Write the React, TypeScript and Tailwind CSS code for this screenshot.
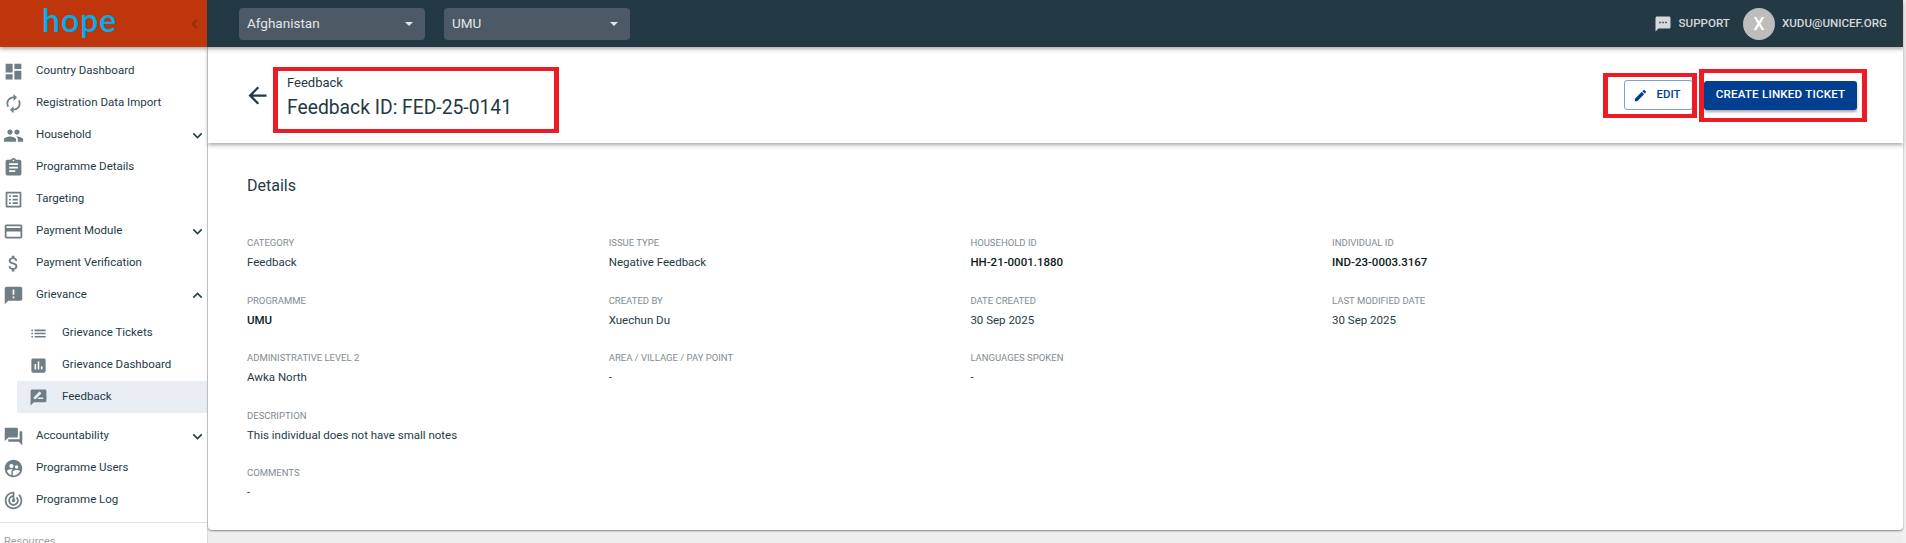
import {
  MdArrowBack,
  MdAssessment,
  MdAssignment,
  MdAttachMoney,
  MdAutorenew,
  MdChevronLeft,
  MdCreditCard,
  MdDashboard,
  MdEdit,
  MdExpandLess,
  MdExpandMore,
  MdAnnouncement,
  MdList,
  MdListAlt,
  MdPeople,
  MdQuestionAnswer,
  MdRateReview,
  MdSms,
  MdSupervisedUserCircle,
  MdTrackChanges,
} from 'react-icons/md';
import type { IconType } from 'react-icons';

type NavItem = { label: string; icon: IconType; chevron?: 'up' | 'down' };

const topItems: NavItem[] = [
  { label: 'Country Dashboard', icon: MdDashboard },
  { label: 'Registration Data Import', icon: MdAutorenew },
  { label: 'Household', icon: MdPeople, chevron: 'down' },
  { label: 'Programme Details', icon: MdAssignment },
  { label: 'Targeting', icon: MdListAlt },
  { label: 'Payment Module', icon: MdCreditCard, chevron: 'down' },
  { label: 'Payment Verification', icon: MdAttachMoney },
  { label: 'Grievance', icon: MdAnnouncement, chevron: 'up' },
];

const subItems = [
  { label: 'Grievance Tickets', icon: MdList },
  { label: 'Grievance Dashboard', icon: MdAssessment },
  { label: 'Feedback', icon: MdRateReview, active: true },
];

const bottomItems: NavItem[] = [
  { label: 'Accountability', icon: MdQuestionAnswer, chevron: 'down' },
  { label: 'Programme Users', icon: MdSupervisedUserCircle },
  { label: 'Programme Log', icon: MdTrackChanges },
];

const fields = [
  { label: 'Category', value: 'Feedback' },
  { label: 'Issue Type', value: 'Negative Feedback' },
  { label: 'Household ID', value: 'HH-21-0001.1880', strong: true },
  { label: 'Individual ID', value: 'IND-23-0003.3167', strong: true },
  { label: 'Programme', value: 'UMU', strong: true },
  { label: 'Created By', value: 'Xuechun Du' },
  { label: 'Date Created', value: '30 Sep 2025' },
  { label: 'Last Modified Date', value: '30 Sep 2025' },
  { label: 'Administrative Level 2', value: 'Awka North' },
  { label: 'Area / Village / Pay Point', value: '-' },
  { label: 'Languages Spoken', value: '-' },
];

function Field({ label, value, strong, wide }: { label: string; value: string; strong?: boolean; wide?: boolean }) {
  return (
    <div className={wide ? 'col-span-4 h-[57.5px]' : 'h-[57.5px]'}>
      <div className="text-[9.5px] leading-[14px] uppercase text-[#7f8b92]">{label}</div>
      <div className={strong ? 'mt-[5px] text-[11.5px] leading-[14px] font-medium text-[#0c1a22]' : 'mt-[5px] text-[11.5px] leading-[14px] text-[#253b46]'}>
        {value}
      </div>
    </div>
  );
}

function Row({ item }: { item: NavItem }) {
  const Icon = item.icon;
  return (
    <div className="flex h-8 items-center pl-[3px]">
      <Icon className="h-[21px] w-[21px] text-[#6f7d85]" />
      <span className="ml-[12px] flex-1 text-[11.5px] text-[#253b46]">{item.label}</span>
      {item.chevron === 'down' && <MdExpandMore className="h-[19px] w-[19px] text-[#253b46]" />}
      {item.chevron === 'up' && <MdExpandLess className="h-[19px] w-[19px] text-[#253b46]" />}
    </div>
  );
}

function CountrySelect({ label }: { label: string }) {
  return (
    <div className="flex h-8 w-[186px] items-center justify-between rounded-[4px] bg-[#4b5a64] pl-2 pr-3">
      <span className="text-[13.5px] text-[#e3e6e8]">{label}</span>
      <span className="h-0 w-0 border-x-[4px] border-t-[4px] border-x-transparent border-t-[#e3e6e8]" />
    </div>
  );
}

export default function App() {
  return (
    <div className="flex h-[543px] w-[1906px] flex-col overflow-hidden bg-[#f1f1f1] font-['Roboto',sans-serif]">
      {/* Top bar */}
      <div className="relative z-20 flex h-[47px] w-[1903px] shrink-0 bg-[#233944] shadow-[0_2px_4px_rgba(0,0,0,0.35)]">
        <div className="flex w-[207px] shrink-0 items-center bg-[#bf360c] pr-[2px]">
          <span className="ml-[42px] flex-1 pb-[7px] font-['Lato',sans-serif] text-[32px] leading-none font-semibold tracking-[1px] text-[#00aeef]">
            hope
          </span>
          <MdChevronLeft className="h-5 w-5 text-[#8f2c0d]" />
        </div>
        <div className="ml-[32px] flex items-center gap-[19px]">
          <CountrySelect label="Afghanistan" />
          <CountrySelect label="UMU" />
        </div>
        <div className="ml-auto flex items-center pr-[16px] text-[11.6px] font-medium uppercase text-[#d5d9dc]">
          <MdSms className="h-[18px] w-[18px]" />
          <span className="ml-[7px]">Support</span>
          <span className="ml-[13px] flex h-8 w-8 items-center justify-center rounded-full bg-[#bdbdbd] text-[18px] font-medium text-white">X</span>
          <span className="ml-[7px]">xudu@unicef.org</span>
        </div>
      </div>

      <div className="flex min-h-0 flex-1">
        {/* Sidebar */}
        <aside className="w-[208px] shrink-0 overflow-hidden border-r border-[#d9d9d9] bg-white pt-[8px]">
          {topItems.map((item) => (
            <Row key={item.label} item={item} />
          ))}
          <div className="pt-[6px] pb-[7px]">
            {subItems.map((item) => {
              const Icon = item.icon;
              return (
                <div key={item.label} className={item.active ? 'ml-[17px] flex h-8 items-center bg-[#e9eef5] pl-[12px]' : 'ml-[17px] flex h-8 items-center pl-[12px]'}>
                  <Icon className="h-[19px] w-[19px] text-[#6f7d85]" />
                  <span className="ml-[14px] text-[11.5px] text-[#253b46]">{item.label}</span>
                </div>
              );
            })}
          </div>
          {bottomItems.map((item) => (
            <Row key={item.label} item={item} />
          ))}
          <div className="mt-[6px] border-t border-[#e0e0e0] pl-1 pt-[12px] text-[11px] leading-[14px] text-[#9e9e9e]">Resources</div>
        </aside>

        {/* Main */}
        <main className="w-[1695px] shrink-0 bg-[#eeeeee]">
          <div className="relative z-10 flex h-[96px] items-center bg-white pl-[36px] pr-[46px] shadow-[0_2px_4px_rgba(0,0,0,0.35)]">
            <MdArrowBack className="h-[27px] w-[27px] text-[#233944]" />
            <div className="relative ml-[16px] mt-[5px] flex-1">
              <div className="text-[13px] leading-[16px] text-[#233944]">Feedback</div>
              <div className="mt-[4px] text-[19.3px] leading-[26px] text-[#233944]">Feedback ID: FED-25-0141</div>
              <div className="absolute top-[-8px] left-[-14px] h-[66px] w-[286px] border-x-[5px] border-y-[4px] border-[#ed1c24]" />
            </div>
            <div className="flex items-center gap-[11px]">
              <div className="relative">
                <button className="flex h-[30px] w-[69px] items-center justify-center gap-[8px] rounded-[3px] border border-[#7f9fcf] bg-white pr-[3px] text-[11.5px] font-medium text-[#033f91]">
                  <MdEdit className="h-[15px] w-[15px]" />
                  EDIT
                </button>
                <div className="absolute top-[-7px] left-[-21px] h-[45px] w-[94px] border-x-[5px] border-y-[4px] border-[#ed1c24]" />
              </div>
              <div className="relative">
                <button className="h-[29px] w-[153px] rounded-[3px] bg-[#033f91] text-[11.6px] font-medium tracking-[0.2px] text-white shadow-[0_2px_3px_rgba(0,0,0,0.35)]">
                  CREATE LINKED TICKET
                </button>
                <div className="absolute top-[-12px] left-[-5px] h-[53px] w-[168px] border-x-[5px] border-y-[4px] border-[#ed1c24]" />
              </div>
            </div>
          </div>

          <section className="h-[387px] rounded-b-[4px] bg-white pl-[39px] pt-[33px] shadow-[0_1px_2px_rgba(0,0,0,0.45)]">
            <h2 className="text-[16px] leading-[20px] text-[#253b46]">Details</h2>
            <div className="mt-[40px] grid grid-cols-[repeat(4,361.7px)]">
              {fields.map((f) => (
                <Field key={f.label} {...f} />
              ))}
              <Field wide label="Description" value="This individual does not have small notes" />
              <Field wide label="Comments" value="-" />
            </div>
          </section>
        </main>
      </div>
    </div>
  );
}
